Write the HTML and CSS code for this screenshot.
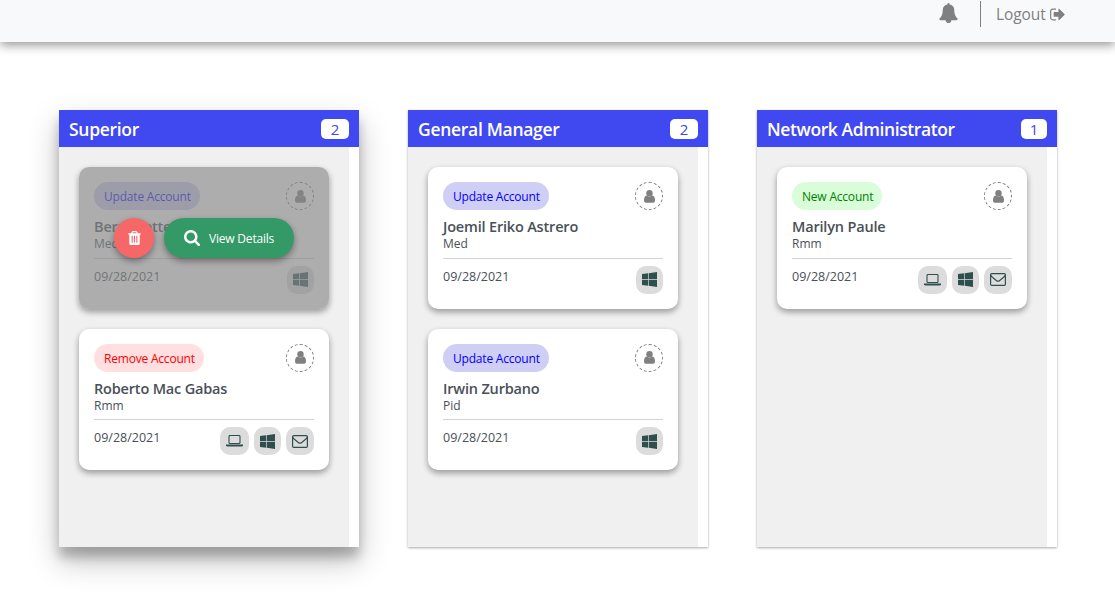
FILE: index.html
```
<!DOCTYPE html>
<html lang="en">
<head>
<meta charset="utf-8">
<title>Account Requests</title>
<link rel="stylesheet" href="styles.css">
</head>
<body>
<svg class="sprite" aria-hidden="true">
  <symbol id="bell" viewBox="0 0 1792 1792"><path d="M1728 1408q0 52-38 90t-90 38h-448q0 106-75 181t-181 75-181-75-75-181h-448q-52 0-90-38t-38-90q50-42 91-88t85-119.500 74.500-158.500 50-206 19.500-260q0-152 117-282.500t307-158.500q-8-19-8-39 0-40 28-68t68-28 68 28 28 68q0 20-8 39 190 28 307 158.500t117 282.500q0 139 19.500 260t50 206 74.500 158.500 85 119.500 91 88z"/></symbol>
  <symbol id="signout" viewBox="64 200 1600 1400"><path d="M704 1440q0 4 1 20t.5 26.500-3 23.500-10 19.500-20.500 6.500h-320q-119 0-203.500-84.500t-84.500-203.500v-704q0-119 84.500-203.500t203.500-84.500h320q13 0 22.500 9.500t9.500 22.500q0 4 1 20t.5 26.500-3 23.500-10 19.500-20.500 6.500h-320q-66 0-113 47t-47 113v704q0 66 47 113t113 47h312q32 0 40 32zm928-544q0 26-19 45l-544 544q-19 19-45 19t-45-19-19-45v-288h-448q-26 0-45-19t-19-45v-384q0-26 19-45t45-19h448v-288q0-26 19-45t45-19 45 19l544 544q19 19 19 45z"/></symbol>
  <symbol id="user" viewBox="0 0 11 13"><circle cx="5.500" cy="3.300" r="3.200"/><path d="M2.600 5.400Q5.500 7.600 8.400 5.400Q11 6 11 10.400Q11 12.700 9.200 12.700H1.800Q0 12.700 0 10.400Q0 6 2.600 5.400z"/></symbol>
  <symbol id="trash" viewBox="192 128 1408 1536"><path fill-rule="evenodd" d="M704 1376v-704q0-14-9-23t-23-9h-64q-14 0-23 9t-9 23v704q0 14 9 23t23 9h64q14 0 23-9t9-23zm256 0v-704q0-14-9-23t-23-9h-64q-14 0-23 9t-9 23v704q0 14 9 23t23 9h64q14 0 23-9t9-23zm256 0v-704q0-14-9-23t-23-9h-64q-14 0-23 9t-9 23v704q0 14 9 23t23 9h64q14 0 23-9t9-23zm-544-992h448l-48-117q-7-9-17-11h-317q-10 2-17 11zm928 32v64q0 14-9 23t-23 9h-96v948q0 83-47 143.500t-113 60.500h-832q-66 0-113-58.500t-47-141.500v-952h-96q-14 0-23-9t-9-23v-64q0-14 9-23t23-9h309l70-167q15-37 54-63t79-26h320q40 0 79 26t54 63l70 167h309q14 0 23 9t9 23z"/></symbol>
  <symbol id="search" viewBox="64 128 1664 1664"><path fill-rule="evenodd" d="M1216 832q0-185-131.500-316.500t-316.500-131.500-316.500 131.500-131.500 316.500 131.500 316.500 316.500 131.500 316.500-131.500 131.500-316.500zm512 832q0 52-38 90t-90 38q-54 0-90-38l-343-342q-179 124-399 124-143 0-273.500-55.500t-225-150-150-225-55.500-273.500 55.500-273.500 150-225 225-150 273.500-55.500 273.500 55.500 225 150 150 225 55.500 273.500q0 220-124 399l343 343q37 37 37 90z"/></symbol>
  <symbol id="windows" viewBox="64 128 1664 1664"><path d="M746 1006v651l-682-94v-557h682zm0-743v659h-682v-565zm982 743v786l-907-125v-661h907zm0-878v794h-907v-669z"/></symbol>
  <symbol id="laptop" viewBox="0 0 17 12"><rect x="3" y=".5" width="11" height="8" rx="1" fill="none" stroke="currentColor" stroke-width="1.1"/><path d="M0 9.600h17v.7q0 1.200-1.700 1.200H1.700Q0 11.500 0 10.300z"/></symbol>
  <symbol id="mail" viewBox="0 0 16 13"><g fill="none" stroke="currentColor" stroke-width="1.200"><rect x=".6" y=".6" width="14.800" height="11.800" rx="1.200"/><path d="M.8 2.200Q1.500 3.700 3 4.800L6.300 7.500Q8 8.900 9.700 7.500L13 4.800Q14.500 3.700 15.200 2.200"/></g></symbol>
</svg>

<header class="navbar">
  <svg class="bell"><use href="#bell"/></svg>
  <a class="logout"><span>Logout</span><svg><use href="#signout"/></svg></a>
</header>

<main class="board">
  <section class="column active">
    <div class="column-head"><h2>Superior</h2><span class="count">2</span></div>
    <div class="column-body">
      <article class="card">
        <div class="row"><span class="pill update">Update Account</span><span class="avatar"><svg><use href="#user"/></svg></span></div>
        <h3>Bernadette</h3>
        <p class="dept">Med</p>
        <div class="foot"><span class="date">09/28/2021</span><span class="chips"><i class="chip win"><svg><use href="#windows"/></svg></i></span></div>
        <div class="overlay">
          <button class="remove"><svg><use href="#trash"/></svg></button>
          <button class="view"><svg><use href="#search"/></svg><span>View Details</span></button>
        </div>
      </article>
      <article class="card">
        <div class="row"><span class="pill delete">Remove Account</span><span class="avatar"><svg><use href="#user"/></svg></span></div>
        <h3>Roberto Mac Gabas</h3>
        <p class="dept">Rmm</p>
        <div class="foot"><span class="date">09/28/2021</span><span class="chips"><i class="chip lap"><svg><use href="#laptop"/></svg></i><i class="chip win"><svg><use href="#windows"/></svg></i><i class="chip mail"><svg><use href="#mail"/></svg></i></span></div>
      </article>
    </div>
  </section>

  <section class="column">
    <div class="column-head"><h2>General Manager</h2><span class="count">2</span></div>
    <div class="column-body">
      <article class="card">
        <div class="row"><span class="pill update">Update Account</span><span class="avatar"><svg><use href="#user"/></svg></span></div>
        <h3>Joemil Eriko Astrero</h3>
        <p class="dept">Med</p>
        <div class="foot"><span class="date">09/28/2021</span><span class="chips"><i class="chip win"><svg><use href="#windows"/></svg></i></span></div>
      </article>
      <article class="card">
        <div class="row"><span class="pill update">Update Account</span><span class="avatar"><svg><use href="#user"/></svg></span></div>
        <h3>Irwin Zurbano</h3>
        <p class="dept">Pid</p>
        <div class="foot"><span class="date">09/28/2021</span><span class="chips"><i class="chip win"><svg><use href="#windows"/></svg></i></span></div>
      </article>
    </div>
  </section>

  <section class="column">
    <div class="column-head"><h2 class="long">Network Administrator</h2><span class="count one">1</span></div>
    <div class="column-body">
      <article class="card">
        <div class="row"><span class="pill new">New Account</span><span class="avatar"><svg><use href="#user"/></svg></span></div>
        <h3>Marilyn Paule</h3>
        <p class="dept">Rmm</p>
        <div class="foot"><span class="date">09/28/2021</span><span class="chips"><i class="chip lap"><svg><use href="#laptop"/></svg></i><i class="chip win"><svg><use href="#windows"/></svg></i><i class="chip mail"><svg><use href="#mail"/></svg></i></span></div>
      </article>
    </div>
  </section>
</main>
</body>
</html>
```
FILE: styles.css
```
* { box-sizing: border-box; }
body { margin: 0; height: 604px; overflow: hidden; background: #fff; color: #495057; font-family: "Segoe UI", "Open Sans", "Noto Sans", sans-serif; }
h2, h3, p { margin: 0; }
svg { display: block; fill: currentColor; }
.sprite { position: absolute; width: 0; height: 0; }

.navbar { height: 42px; padding: 1px 50px 0 0; display: flex; justify-content: flex-end; align-items: flex-start; background: #f8f9fb; color: gray; box-shadow: 0 3px 10px rgba(0,0,0,.42); }
.bell { width: 21px; height: 20px; margin: 2px 21px 0 0; }
.logout { display: flex; align-items: center; gap: 4px; height: 26px; padding-left: 15px; border-left: 1px solid gray; font-size: 15.500px; }
.logout span { width: 50px; white-space: nowrap; letter-spacing: -.1px; }
.logout svg { width: 15px; height: 13px; }

.board { display: flex; gap: 49px; padding: 68px 0 0 59px; }
.column { width: 300px; height: 437px; display: flex; flex-direction: column; background: #fff; box-shadow: 0 1px 3px rgba(0,0,0,.12), 0 1px 2px rgba(0,0,0,.24); }
.column.active { box-shadow: 0 14px 28px rgba(0,0,0,.25), 0 10px 10px rgba(0,0,0,.22); }
.column-head { height: 37px; padding: 0 10px; display: flex; justify-content: space-between; align-items: center; background: #4048ef; color: #fff; }
.column-head h2 { font-size: 17.500px; font-weight: 600; line-height: 36px; white-space: nowrap; letter-spacing: -.3px; }
.column-head h2.long { letter-spacing: -.4px; }
.count { width: 28px; height: 20px; border-radius: 5px; background: #fff; color: #4048ef; font-size: 15px; font-weight: 500; line-height: 20px; text-align: center; }
.count.one { width: 26px; }
.column-body { flex: 1; width: 290px; padding: 20px; display: flex; flex-direction: column; gap: 20px; background: #f0f0f0; }

.card { position: relative; height: 141.500px; padding: 15px; border-radius: 10px; background: #fff; box-shadow: 0 3px 6px rgba(0,0,0,.16), 0 3px 6px rgba(0,0,0,.23); }
.row { display: flex; justify-content: space-between; height: 28px; }
.pill { padding: 0 10px; border-radius: 14px; font-size: 12px; line-height: 29px; white-space: nowrap; text-align: center; letter-spacing: -.2px; }
.update { width: 106px; background: #cfcef5; color: #00f; }
.delete { width: 110px; background: #ffdfe0; color: red; }
.new { width: 90px; background: #d9fdd9; color: green; }
.avatar { width: 28px; height: 28px; display: grid; place-items: center; border: 1px dashed gray; border-radius: 50%; color: gray; }
.avatar svg { width: 11px; height: 13px; }
.card h3 { margin-top: 7px; font-size: 14.500px; font-weight: 600; line-height: 20px; white-space: nowrap; letter-spacing: -.18px; }
.dept { font-size: 12px; line-height: 13.600px; }
.foot { display: flex; justify-content: space-between; margin-top: 7px; padding-top: 7px; border-top: 1px solid #d3d3d3; }
.date { font-size: 12.500px; line-height: 21px; }
.chips { display: flex; gap: 5px; }
.chip { height: 28px; width: 28px; display: grid; place-items: center; border-radius: 10px; background: #dcdcdc; color: darkslategray; }
.chip.win { width: 27px; }
.chip.lap { width: 29px; }
.win svg { width: 15px; height: 15px; }
.lap svg { width: 17px; height: 12px; }
.mail svg { width: 16px; height: 13px; }

.overlay { position: absolute; inset: 0; display: flex; justify-content: center; align-items: center; gap: 10px; border-radius: 10px; background: rgba(133,133,133,.67); }
.overlay button { height: 40px; padding: 0; border: 0; border-radius: 20px; color: #fff; font: 12px "Segoe UI", "Open Sans", "Noto Sans", sans-serif; box-shadow: 0 3px 6px rgba(0,0,0,.16), 0 3px 6px rgba(0,0,0,.23); }
.overlay .remove { width: 40px; display: grid; place-items: center; background: #f66868; }
.remove svg { width: 13px; height: 14px; }
.overlay .view { width: 130px; display: flex; align-items: center; gap: 9px; background: #339966; white-space: nowrap; }
.view svg { width: 16px; height: 16px; margin-left: 20px; }
.view span { padding-top: 1px; letter-spacing: -.2px; }
```
